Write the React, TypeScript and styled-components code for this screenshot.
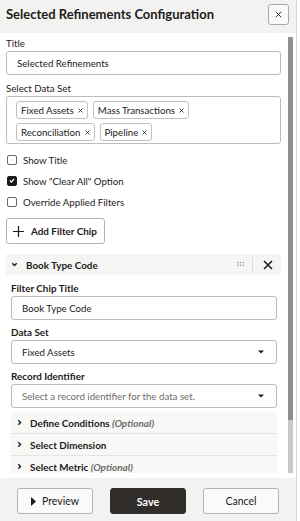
import React from "react";
import styled, { createGlobalStyle } from "styled-components";

const Global = createGlobalStyle`
  html, body { margin: 0; padding: 0; background: #fff; }
  body { font-family: Lato, "Noto Sans", "Liberation Sans", sans-serif; color: #1d1b19; }
  * { box-sizing: border-box; }
`;

const Panel = styled.div`
  width: 297px;
  height: 521px;
  display: flex;
  flex-direction: column;
  border-right: 1px solid #d4d4d4;
  overflow: hidden;
`;

const Header = styled.div`
  height: 33px;
  flex: none;
  background: #f2f2f1;
  display: flex;
  align-items: center;
  justify-content: space-between;
  padding: 0 7px 5px 6px;
`;

const HeaderTitle = styled.div`
  font-weight: 700;
  font-size: 13px;
`;

const IconButton = styled.div`
  width: 21px;
  height: 21px;
  border: 1px solid #a9a9a9;
  border-radius: 3px;
  background: #fafafa;
  display: flex;
  align-items: center;
  justify-content: center;
`;

const Body = styled.div`
  flex: 1;
  display: flex;
  padding-bottom: 5px;
  min-height: 0;
`;

const Scroll = styled.div`
  flex: 1;
  overflow: hidden;
  padding: 3px 7px 0 6px;
  display: flex;
  flex-direction: column;
  & > * { flex-shrink: 0; }
`;

const Track = styled.div`
  width: 5px;
  margin: 4px 3px 0 0;
  background: #c9c9c9;
  display: flex;
  flex-direction: column;
`;

const Thumb = styled.div`
  height: 383px;
  background: #8f8f8f;
`;

const Label = styled.div<{ $bold?: boolean; $gap?: number }>`
  font-size: ${(p) => (p.$bold ? 9.9 : 9.7)}px;
  line-height: 15px;
  font-weight: ${(p) => (p.$bold ? 700 : 400)};
  margin-top: ${(p) => p.$gap ?? 0}px;
`;

const Field = styled.div<{ $muted?: boolean }>`
  height: 24px;
  flex: none;
  border: 1px solid #bdbcbb;
  border-radius: 3px;
  display: flex;
  align-items: center;
  justify-content: space-between;
  padding: 0 12px 0 10px;
  font-size: 9.7px;
  color: ${(p) => (p.$muted ? "#6f6c69" : "#1d1b19")};
`;

const ChipBox = styled.div`
  border: 1px solid #bdbcbb;
  border-radius: 3px;
  padding: 4px 9px 2px 9px;
  display: flex;
  flex-wrap: wrap;
  gap: 4px 5px;
`;

const Chip = styled.div`
  height: 18px;
  border: 1px solid #c2c1c0;
  border-radius: 3px;
  display: flex;
  align-items: center;
  gap: 4px;
  padding: 0 4px 0 4px;
  font-size: 9.7px;
`;

const CheckRow = styled.div<{ $first?: boolean }>`
  height: 21px;
  display: flex;
  align-items: center;
  gap: 6px;
  padding-left: 1px;
  margin-top: ${(p) => (p.$first ? 5 : 0)}px;
  font-size: 9.7px;
`;

const Box = styled.span<{ $checked?: boolean }>`
  width: 10px;
  height: 10px;
  border: 1px solid ${(p) => (p.$checked ? "#1d1b19" : "#6a6866")};
  border-radius: 2px;
  background: ${(p) => (p.$checked ? "#1d1b19" : "#fff")};
  display: flex;
  align-items: center;
  justify-content: center;
`;

const AddButton = styled.div`
  margin-top: 6px;
  width: 99px;
  height: 26px;
  border: 1px solid #b4b3b2;
  border-radius: 3px;
  display: flex;
  align-items: center;
  gap: 7px;
  padding-left: 6px;
  font-size: 9.9px;
  font-weight: 700;
  white-space: nowrap;
`;

const SectionHeader = styled.div`
  margin-top: 10px;
  height: 21px;
  background: #f5f5f4;
  display: flex;
  align-items: center;
  padding: 0 8px 0 5px;
  font-size: 9.9px;
  font-weight: 700;
`;

const SectionTitle = styled.span`
  flex: 1;
  margin-left: 8px;
`;

const Divider = styled.span`
  width: 1px;
  height: 15px;
  background: #dcdcdc;
  margin: 0 10px 0 8px;
`;

const SectionBody = styled.div`
  padding: 6px 4px 0 5px;
  display: flex;
  flex-direction: column;
  & > * { flex-shrink: 0; }
`;

const Accordion = styled.div<{ $first?: boolean }>`
  height: 22px;
  background: #f8f8f7;
  border-bottom: 1px solid #e4e4e3;
  display: flex;
  align-items: center;
  gap: 7px;
  padding-left: 5px;
  font-size: 9.9px;
  font-weight: 700;
  margin-top: ${(p) => (p.$first ? 4 : 0)}px;
`;

const Optional = styled.span`
  font-style: italic;
  font-weight: 700;
  color: #6f6c69;
  font-size: 10px;
`;

const Footer = styled.div`
  height: 43px;
  flex: none;
  background: #f2f2f1;
  display: flex;
  align-items: flex-start;
  gap: 17px;
  padding: 10px 0 0 17px;
`;

const FooterButton = styled.div<{ $primary?: boolean }>`
  width: 76px;
  height: 26px;
  border-radius: 3px;
  border: 1px solid ${(p) => (p.$primary ? "#312d2a" : "#b4b3b2")};
  background: ${(p) => (p.$primary ? "#312d2a" : "#fafafa")};
  color: ${(p) => (p.$primary ? "#fff" : "#1d1b19")};
  display: flex;
  align-items: center;
  justify-content: center;
  gap: 6px;
  font-size: ${(p) => (p.$primary ? 10.8 : 10.5)}px;
  font-weight: ${(p) => (p.$primary ? 700 : 400)};
`;

const Caret = () => (
  <svg width="6" height="4" viewBox="0 0 6 4">
    <path d="M0 0.5h6L3 3.5z" fill="#1d1b19" />
  </svg>
);

const Chevron = ({ down }: { down?: boolean }) => (
  <svg width="7" height="7" viewBox="0 0 7 7">
    <path
      d={down ? "M1.3 2.3L3.5 4.5l2.2-2.2" : "M2.3 1.2L4.5 3.5 2.3 5.8"}
      fill="none"
      stroke="#1d1b19"
      strokeWidth="1.4"
    />
  </svg>
);

const XIcon = ({ size, w }: { size: number; w: number }) => (
  <svg width={size} height={size} viewBox="0 0 10 10">
    <path d="M1 1l8 8M9 1l-8 8" stroke="#1d1b19" strokeWidth={w} />
  </svg>
);

const chips = ["Fixed Assets", "Mass Transactions", "Reconciliation", "Pipeline"];

export default function App() {
  return (
    <>
      <Global />
      <Panel>
        <Header>
          <HeaderTitle>Selected Refinements Configuration</HeaderTitle>
          <IconButton>
            <XIcon size={7} w={1.3} />
          </IconButton>
        </Header>
        <Body>
          <Scroll>
            <Label>Title</Label>
            <Field>Selected Refinements</Field>
            <Label $gap={6}>Select Data Set</Label>
            <ChipBox>
              {chips.map((c) => (
                <Chip key={c}>
                  {c}
                  <XIcon size={5} w={1.6} />
                </Chip>
              ))}
            </ChipBox>
            <CheckRow $first>
              <Box />
              Show Title
            </CheckRow>
            <CheckRow>
              <Box $checked>
                <svg width="6" height="5" viewBox="0 0 7 6">
                  <path d="M1 3l1.8 1.8L6 1" fill="none" stroke="#fff" strokeWidth="1.5" />
                </svg>
              </Box>
              Show "Clear All" Option
            </CheckRow>
            <CheckRow>
              <Box />
              Override Applied Filters
            </CheckRow>
            <AddButton>
              <svg width="11" height="11" viewBox="0 0 11 11">
                <path d="M5.5 0v11M0 5.5h11" stroke="#1d1b19" strokeWidth="1.2" />
              </svg>
              Add Filter Chip
            </AddButton>
            <SectionHeader>
              <Chevron down />
              <SectionTitle>Book Type Code</SectionTitle>
              <svg width="7" height="5" viewBox="0 0 7 5">
                <g fill="#9a9896">
                  <rect x="0" y="0" width="1.3" height="1.3" />
                  <rect x="2.8" y="0" width="1.3" height="1.3" />
                  <rect x="5.6" y="0" width="1.3" height="1.3" />
                  <rect x="0" y="2.6" width="1.3" height="1.3" />
                  <rect x="2.8" y="2.6" width="1.3" height="1.3" />
                  <rect x="5.6" y="2.6" width="1.3" height="1.3" />
                </g>
              </svg>
              <Divider />
              <XIcon size={10} w={1.6} />
            </SectionHeader>
            <SectionBody>
              <Label $bold>Filter Chip Title</Label>
              <Field>Book Type Code</Field>
              <Label $bold $gap={5}>Data Set</Label>
              <Field>
                Fixed Assets
                <Caret />
              </Field>
              <Label $bold $gap={5}>Record Identifier</Label>
              <Field $muted>
                Select a record identifier for the data set.
                <Caret />
              </Field>
              <Accordion $first>
                <Chevron />
                <span>
                  Define Conditions <Optional>(Optional)</Optional>
                </span>
              </Accordion>
              <Accordion>
                <Chevron />
                <span>Select Dimension</span>
              </Accordion>
              <Accordion>
                <Chevron />
                <span>
                  Select Metric <Optional>(Optional)</Optional>
                </span>
              </Accordion>
            </SectionBody>
          </Scroll>
          <Track>
            <Thumb />
          </Track>
        </Body>
        <Footer>
          <FooterButton>
            <svg width="5" height="9" viewBox="0 0 5 9">
              <path d="M0 0l5 4.5L0 9z" fill="#1d1b19" />
            </svg>
            Preview
          </FooterButton>
          <FooterButton $primary>Save</FooterButton>
          <FooterButton>Cancel</FooterButton>
        </Footer>
      </Panel>
    </>
  );
}
